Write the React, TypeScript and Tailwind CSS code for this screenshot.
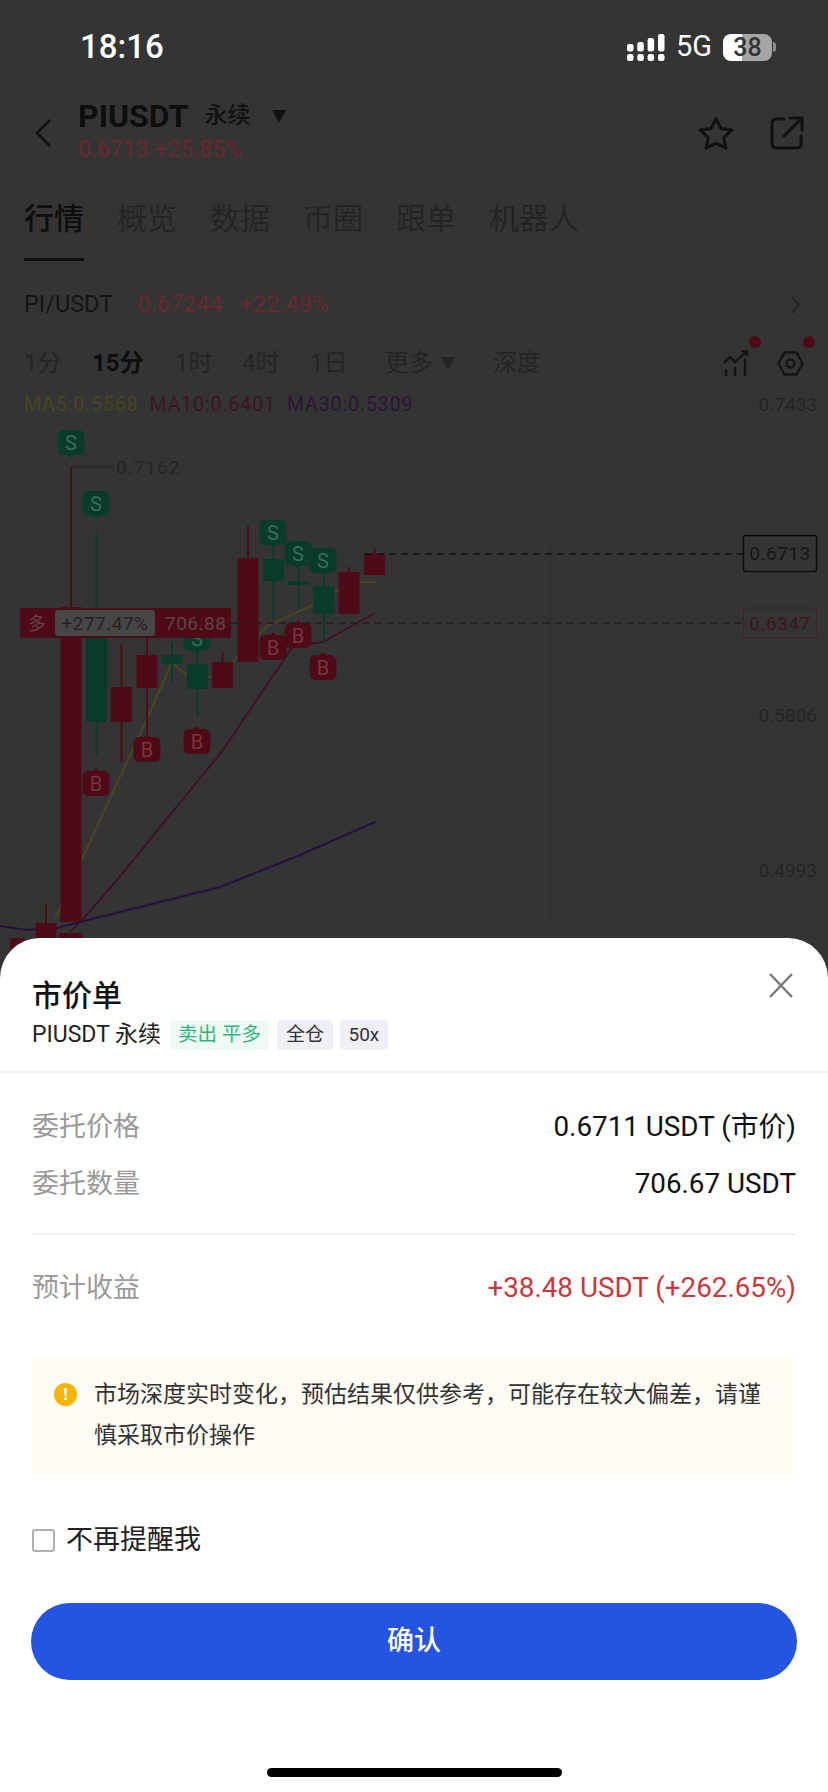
import type { ReactNode } from "react";

const red = "#4e0a16";
const green = "#0a3a2a";

type Candle = { x: number; top: number; bottom: number; wickTop: number; wickBottom: number; up: boolean };

const candles: Candle[] = [
  { x: 71, top: 607, bottom: 922, wickTop: 467, wickBottom: 922, up: true },
  { x: 96.5, top: 608, bottom: 722, wickTop: 530, wickBottom: 757, up: false },
  { x: 121.5, top: 687, bottom: 722, wickTop: 644, wickBottom: 762, up: true },
  { x: 147, top: 655, bottom: 688, wickTop: 638, wickBottom: 734, up: true },
  { x: 172, top: 655, bottom: 664, wickTop: 642, wickBottom: 682, up: false },
  { x: 197.5, top: 664, bottom: 689, wickTop: 652, wickBottom: 716, up: false },
  { x: 222.5, top: 662, bottom: 688, wickTop: 652, wickBottom: 688, up: true },
  { x: 248, top: 558, bottom: 662, wickTop: 526, wickBottom: 662, up: true },
  { x: 273.5, top: 559, bottom: 581, wickTop: 547, wickBottom: 620, up: false },
  { x: 298.5, top: 581, bottom: 585, wickTop: 568, wickBottom: 609, up: false },
  { x: 324, top: 586, bottom: 614, wickTop: 576, wickBottom: 642, up: false },
  { x: 349, top: 572, bottom: 614, wickTop: 567, wickBottom: 614, up: true },
  { x: 374.5, top: 554, bottom: 575, wickTop: 548, wickBottom: 575, up: true },
  { x: 46, top: 923, bottom: 950, wickTop: 904, wickBottom: 950, up: true },
];

const markers: { x: number; y: number; t: "S" | "B" }[] = [
  { x: 71, y: 430, t: "S" },
  { x: 96, y: 491, t: "S" },
  { x: 197, y: 626, t: "S" },
  { x: 273, y: 520, t: "S" },
  { x: 298, y: 541, t: "S" },
  { x: 323, y: 548, t: "S" },
  { x: 96, y: 768, t: "B" },
  { x: 147, y: 734, t: "B" },
  { x: 197, y: 726, t: "B" },
  { x: 273, y: 632, t: "B" },
  { x: 298, y: 620, t: "B" },
  { x: 323, y: 652, t: "B" },
];

function Marker({ x, y, t }: { x: number; y: number; t: "S" | "B" }) {
  const isSell = t === "S";
  return (
    <g>
      <rect x={x - 13.5} y={isSell ? y : y + 3} width={27} height={25} rx={6} fill={isSell ? green : red} />
      <path
        d={isSell ? `M${x - 4} ${y + 24}L${x} ${y + 28}L${x + 4} ${y + 24}Z` : `M${x - 4} ${y + 4}L${x} ${y}L${x + 4} ${y + 4}Z`}
        fill={isSell ? green : red}
      />
      <text
        x={x}
        y={isSell ? y + 20 : y + 23}
        textAnchor="middle"
        fontSize={20}
        fontFamily="Roboto, sans-serif"
        fill={isSell ? "#34705c" : "#7a3440"}
      >
        {t}
      </text>
    </g>
  );
}

function KlineChart() {
  const axisFont = "Roboto, sans-serif";
  return (
    <svg viewBox="0 420 828 530" className="block w-[828px] h-[530px] -mb-[12px] shrink-0">
      {/* faint grid and watermark behind the candles */}
      <path d="M551 545V925" stroke="#323232" strokeWidth="6" />
      <rect x="308" y="690" width="120" height="26" rx="10" fill="#333333" />
      <rect x="450" y="688" width="76" height="28" rx="6" fill="#333333" />

      <polyline
        points="55,919 83,857 112,794 147,719 172,662 187,676 213,677 233,662 267,626 313,605 337,591 360,582 375,582"
        fill="none"
        stroke="#4a4420"
        strokeWidth="2"
      />
      <polyline
        points="70,932 83,919 117,880 223,750 293,646 323,642 375,613"
        fill="none"
        stroke="#42102a"
        strokeWidth="2"
      />
      <polyline
        points="0,926 27,930 57,928 100,917 220,887 300,855 375,822"
        fill="none"
        stroke="#261040"
        strokeWidth="2"
      />

      {candles.map((c, i) => {
        const color = c.up ? red : green;
        return (
          <g key={i}>
            <line x1={c.x} x2={c.x} y1={c.wickTop} y2={c.wickBottom} stroke={color} strokeWidth="2" />
            <rect x={c.x - 10.5} y={c.top} width={21} height={c.bottom - c.top} fill={color} />
          </g>
        );
      })}
      <rect x="58" y="933" width="25" height="17" rx="4" fill={red} />
      <rect x="10" y="938" width="15" height="12" rx="3" fill={red} />

      {markers.map((m, i) => (
        <Marker key={i} {...m} />
      ))}

      <line x1="72" x2="114" y1="467" y2="467" stroke="#222" strokeWidth="1" />
      <text x="116" y="474" fontSize="19" fontFamily={axisFont} fill="#242424" letterSpacing="1">
        0.7162
      </text>

      <line x1="365" x2="743" y1="554" y2="554" stroke="#111" strokeWidth="1.5" strokeDasharray="7 5" />
      <line x1="231" x2="743" y1="623" y2="623" stroke="#2a1a1c" strokeWidth="1.5" strokeDasharray="7 5" />

      <rect x="20" y="608" width="211" height="30" rx="2" fill={red} />
      <text x="28" y="630" fontSize="18" fontFamily="'Noto Sans CJK SC', sans-serif" fill="#6a4046">
        多
      </text>
      <rect x="55" y="610" width="100" height="26" rx="3" fill="#464646" />
      <text x="105" y="630" textAnchor="middle" fontSize="19" fontFamily={axisFont} fill="#2e1e1e" letterSpacing="0.5">
        +277.47%
      </text>
      <text x="165" y="630" fontSize="19" fontFamily={axisFont} fill="#5e4444" letterSpacing="0.5">
        706.88
      </text>

      <rect x="743.5" y="535.5" width="73" height="36" rx="2" fill="#343434" stroke="#0c0c0c" strokeWidth="1.5" />
      <text x="780" y="560" textAnchor="middle" fontSize="19" fontFamily={axisFont} fill="#161616" letterSpacing="0.5">
        0.6713
      </text>
      <rect x="743.5" y="608" width="73" height="30" rx="2" fill="#343434" stroke="#3e2024" strokeWidth="1" />
      <text x="780" y="630" textAnchor="middle" fontSize="19" fontFamily={axisFont} fill="#3e161c" letterSpacing="0.5">
        0.6347
      </text>

      <text x="817" y="722" textAnchor="end" fontSize="19" fontFamily={axisFont} fill="#242424">
        0.5806
      </text>
      <text x="817" y="877" textAnchor="end" fontSize="19" fontFamily={axisFont} fill="#242424">
        0.4993
      </text>
    </svg>
  );
}

function SignalIcon() {
  return (
    <svg width="38" height="27" viewBox="0 0 38 27" fill="white" className="shrink-0">
      <rect x="0" y="20" width="6.5" height="7" rx="2.2" />
      <rect x="10.3" y="20" width="6.5" height="7" rx="2.2" />
      <rect x="20.6" y="20" width="6.5" height="7" rx="2.2" />
      <rect x="31" y="20" width="6.5" height="7" rx="2.2" />
      <rect x="0" y="10" width="6.5" height="7.5" rx="2.2" />
      <rect x="10.3" y="8" width="6.5" height="9.5" rx="2.2" />
      <rect x="20.6" y="4" width="6.5" height="13.5" rx="2.2" />
      <rect x="31" y="0" width="6.5" height="17.5" rx="2.2" />
    </svg>
  );
}

function PeriodIcons() {
  return (
    <div className="flex items-center gap-[27px]">
      <div className="relative w-[27px] h-[27px]">
        <svg viewBox="0 0 27 27" width="27" height="27" fill="none" stroke="#141414" strokeWidth="2.4">
          <path d="M1 13 7 7l5 5 11-10M18 1h6v5" />
          <path d="M3 19v7M12 17v9M22 9v17" />
        </svg>
        <span className="absolute -top-[14px] left-[26px] w-[12px] h-[12px] rounded-full bg-[#4e0a16]" />
      </div>
      <div className="relative w-[27px] h-[27px]">
        <svg viewBox="0 0 27 27" width="27" height="27" fill="none" stroke="#141414" strokeWidth="2.4">
          <path d="M7.5 2.5h12l6 11-6 11h-12l-6-11z" />
          <circle cx="13.5" cy="13.5" r="4" />
        </svg>
        <span className="absolute -top-[14px] left-[26px] w-[12px] h-[12px] rounded-full bg-[#4e0a16]" />
      </div>
    </div>
  );
}

function InfoRow({ label, value, className }: { label: string; value: ReactNode; className: string }) {
  return (
    <div className="flex items-center justify-between h-[36px]">
      <span className="text-[27px] text-[#9a9a9a]">{label}</span>
      <span className={`text-[27.8px] font-[450] ${className}`}>{value}</span>
    </div>
  );
}

export default function App() {
  return (
    <div
      className="flex flex-col w-[828px] h-[1792px] bg-[#343434] overflow-hidden"
      style={{ fontFamily: "Roboto, 'Noto Sans CJK SC', sans-serif" }}
    >
      {/* status bar */}
      <div className="flex items-center justify-between h-[94px] pl-[80px] pr-[52px] shrink-0">
        <span className="text-[33px] font-medium text-white">18:16</span>
        <div className="flex items-center">
          <SignalIcon />
          <span className="ml-[11px] text-[29px] text-white">5G</span>
          <div className="ml-[11px] flex items-center justify-center w-[49px] h-[27px] rounded-[8px] bg-[linear-gradient(90deg,#ffffff_39%,#a5a5a5_39%)] text-[25px] font-medium leading-none text-[#343434]">
            38
          </div>
          <div className="ml-[1px] w-[3px] h-[10px] rounded-r-sm bg-[#8a8a8a]" />
        </div>
      </div>

      {/* header */}
      <div className="flex items-center h-[78px] pl-[35px] pr-[24px] shrink-0">
        <svg width="17" height="28" viewBox="0 0 17 28" fill="none" stroke="#111" strokeWidth="2.6">
          <path d="M15 1 2 14l13 13" />
        </svg>
        <div className="ml-[26px] -mt-[6px] flex flex-col">
          <div className="flex items-center h-[40px]">
            <span className="text-[32px] font-bold text-[#0e0e0e] leading-none">PIUSDT</span>
            <span className="ml-[16px] text-[23px] font-medium text-[#111]">永续</span>
            <span className="ml-[22px] w-0 h-0 border-x-[7px] border-x-transparent border-t-[13px] border-t-[#111]" />
          </div>
          <span className="text-[23px] leading-[28px] text-[#68282d]">0.6713 +25.85%</span>
        </div>
        <div className="ml-auto flex items-center gap-[36px]">
          <svg width="36" height="35" viewBox="0 0 36 35" fill="none" stroke="#111" strokeWidth="3" strokeLinejoin="round">
            <path d="M18 2.500l4.800 10 11 1.400-8 7.600 2.100 10.900L18 27.100 8.100 32.400l2.100-10.900-8-7.600 11-1.400z" />
          </svg>
          <svg width="34" height="34" viewBox="0 0 34 34" fill="none" stroke="#111" strokeWidth="3" strokeLinecap="round">
            <path d="M14 3H6a4 4 0 0 0-4 4v21a4 4 0 0 0 4 4h21a4 4 0 0 0 4-4v-8" />
            <path d="M14 20 31 3M20 2h12v12" />
          </svg>
        </div>
      </div>

      {/* tabs */}
      <div className="flex gap-[33px] px-[24px] pt-[29px] shrink-0 text-[30px] leading-[36px] text-[#242424]">
        <div className="flex flex-col">
          <span className="font-medium text-[#0e0e0e]">行情</span>
          <div className="mt-[21px] h-[3px] bg-[#0e0e0e]" />
        </div>
        <span>概览</span>
        <span>数据</span>
        <span>币圈</span>
        <span>跟单</span>
        <span>机器人</span>
      </div>

      {/* ticker */}
      <div className="flex items-center h-[28px] mt-[30px] px-[24px] shrink-0 text-[23.5px]">
        <span className="text-[#141414]">PI/USDT</span>
        <span className="ml-[24px] text-[#68282d]">0.67244</span>
        <span className="ml-[17px] text-[#68282d]">+22.49%</span>
        <svg className="ml-auto mr-[3px]" width="10" height="20" viewBox="0 0 10 20" fill="none" stroke="#242424" strokeWidth="2">
          <path d="M1 2l7 8-7 8" />
        </svg>
      </div>

      {/* periods */}
      <div className="flex items-center h-[28px] mt-[30px] pl-[24px] pr-[24px] shrink-0 text-[24px] text-[#242424]">
        <span className="w-[68px]">1分</span>
        <span className="w-[83px] font-bold text-[#0e0e0e]">15分</span>
        <span className="w-[67px]">1时</span>
        <span className="w-[68px]">4时</span>
        <span className="w-[75px]">1日</span>
        <span className="flex items-center w-[108px]">
          更多
          <span className="ml-[8px] w-0 h-0 border-x-[7px] border-x-transparent border-t-[13px] border-t-[#242424]" />
        </span>
        <span>深度</span>
        <div className="ml-auto">
          <PeriodIcons />
        </div>
      </div>

      {/* moving averages */}
      <div className="flex items-center h-[24px] mt-[16px] mb-[3px] pl-[24px] pr-[11px] shrink-0 text-[19.5px]">
        <span className="tracking-[0.9px] text-[#4a4420]">MA5:0.5568</span>
        <span className="ml-[11px] tracking-[0.9px] text-[#3a1426]">MA10:0.6401</span>
        <span className="ml-[11px] tracking-[0.9px] text-[#2e1434]">MA30:0.5309</span>
        <span className="ml-auto text-[19px] text-[#242424]">0.7433</span>
      </div>

      <KlineChart />

      {/* order sheet */}
      <div className="relative flex flex-col flex-1 bg-white rounded-t-[40px] text-[#111]">
        <div className="flex items-start justify-between h-[135px] pl-[32px] pr-[35px] pt-[38px] border-b-2 border-[#f3f3f3]">
          <div>
            <div className="text-[30px] leading-[40px] font-medium">市价单</div>
            <div className="flex items-center mt-[4px] text-[23px] leading-[30px] text-[#222]">
              <span>PIUSDT 永续</span>
              <span className="ml-[9px] px-[8px] text-[19.5px] bg-[#f0faf5] text-[#2fb57f] rounded-[4px]">卖出 平多</span>
              <span className="ml-[8px] px-[9px] text-[19px] bg-[#eff0f5] text-[#333] rounded-[4px]">全仓</span>
              <span className="ml-[7px] px-[8.5px] text-[19px] bg-[#eff0f5] text-[#333] rounded-[4px]">50x</span>
            </div>
          </div>
          <svg width="24" height="25" viewBox="0 0 24 25" fill="none" stroke="#777" strokeWidth="2.4" className="-mt-[3px]">
            <path d="M1 1l22 23M23 1 1 24" />
          </svg>
        </div>

        <div className="px-[32px]">
          <div className="flex flex-col gap-[21px] pt-[36px] pb-[31px] border-b-2 border-[#f2f2f2]">
            <InfoRow
              label="委托价格"
              value={
                <>
                  0.6711 USDT (<span className="font-normal">市价</span>)
                </>
              }
              className="text-[#111]"
            />
            <InfoRow label="委托数量" value="706.67 USDT" className="text-[#111]" />
          </div>
          <div className="pt-[35px]">
            <InfoRow label="预计收益" value="+38.48 USDT (+262.65%)" className="text-[#c8383e]" />
          </div>

          <div className="flex mt-[51px] h-[117px] pt-[17px] pl-[22px] pr-[24px] bg-[#fffcf5]">
            <div className="flex items-center justify-center mt-[9px] w-[23px] h-[23px] rounded-full bg-[#f5b400] text-[17px] font-bold leading-none text-white shrink-0">
              !
            </div>
            <p className="ml-[17px] text-[23px] leading-[41px] text-[#333]">
              市场深度实时变化，预估结果仅供参考，可能存在较大偏差，请谨慎采取市价操作
            </p>
          </div>

          <div className="flex items-center mt-[48px] h-[36px]">
            <span className="w-[23px] h-[23px] rounded-[3px] border-2 border-[#b0b0b0]" />
            <span className="ml-[11px] text-[27px] text-[#222]">不再提醒我</span>
          </div>

          <button className="flex items-center justify-center w-[766px] -ml-[1px] h-[77px] mt-[45px] rounded-full bg-[#2554e0] text-[27px] font-medium text-white">
            确认
          </button>
        </div>

        <div className="mx-auto mt-[88px] w-[295px] h-[9px] rounded-full bg-black" />
      </div>
    </div>
  );
}
